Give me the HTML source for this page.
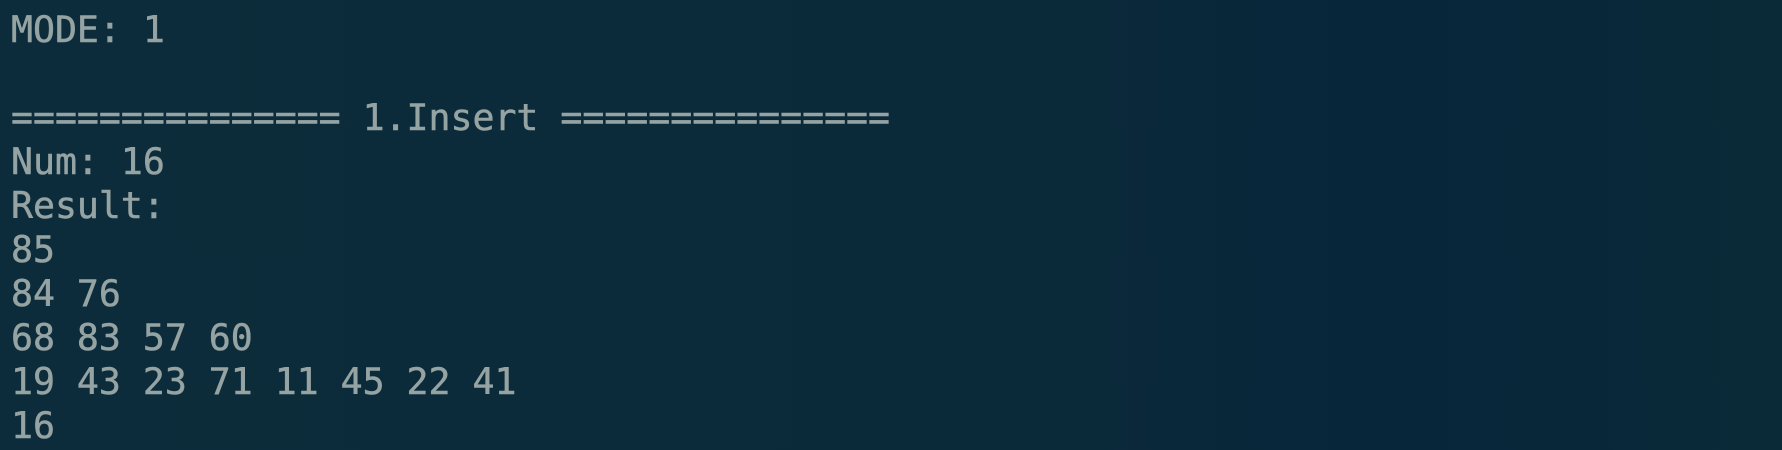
<!DOCTYPE html>
<html><head><style>
html,body{margin:0;padding:0;}
body{width:1782px;height:450px;overflow:hidden;background:linear-gradient(90deg,#0c2c3b 0%,#0b2a39 55%,#07263a 78%,#0a2a38 100%);}
pre{margin:0;padding:8px 0 0 11px;font-family:"DejaVu Sans Mono","Liberation Mono",monospace;font-size:36.5px;line-height:44px;color:#95a3a3;-webkit-text-stroke:0.5px #95a3a3;}
</style></head><body><pre>MODE: 1

=============== 1.Insert ===============
Num: 16
Result:
85
84 76
68 83 57 60
19 43 23 71 11 45 22 41
16</pre></body></html>
